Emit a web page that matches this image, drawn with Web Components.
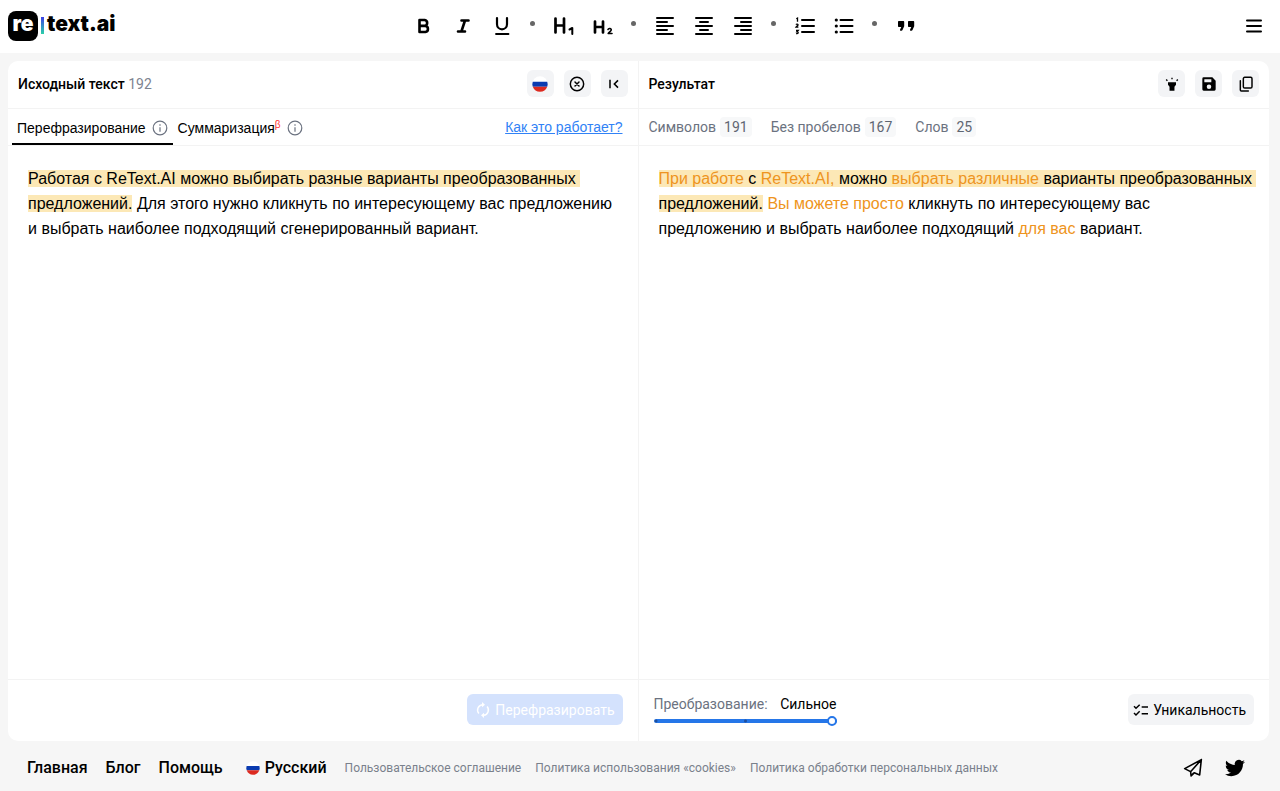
<!DOCTYPE html>
<html lang="ru">
<head>
<meta charset="utf-8">
<meta name="viewport" content="width=device-width, initial-scale=1">
<title>re|text.ai</title>
<style>
  body { margin: 0; background: #f6f6f6; color: #000; font-family: Roboto, "Liberation Sans", sans-serif; font-size: 14px; line-height: 20px; }
</style>
</head>
<body>
<rt-app></rt-app>
<script>
const ICONS = {
  bold: '<path d="M7.5 6.5h5.2a3 3 0 0 1 0 5.9H7.5zM7.5 12.4h5.9a3.1 3.1 0 0 1 0 6.1H7.5z" transform="translate(0 -.5)" fill="none" stroke="currentColor" stroke-width="2.6" stroke-linejoin="round"/>',
  italic: '<path d="M10.5 6.5h7M7 17.500h7M14 6.500 10.400 17.500" fill="none" stroke="currentColor" stroke-width="2.600" stroke-linecap="round"/>',
  underline: '<path d="M7 4v6.300a5 5 0 0 0 10 0V4" fill="none" stroke="currentColor" stroke-width="2.200" stroke-linecap="round"/><path d="M6 20h12.500" stroke="currentColor" stroke-width="1.800" stroke-linecap="round"/>',
  h1: '<path d="M3.500 4.500v14M12 4.500v14M3.500 11.500H12" fill="none" stroke="currentColor" stroke-width="2.700" stroke-linecap="round"/><path d="M17.500 15.500 20.300 14v6" fill="none" stroke="currentColor" stroke-width="2" stroke-linecap="round" stroke-linejoin="round"/>',
  h2: '<path d="M4 7.500v11M12 7.500v11M4 13h8" fill="none" stroke="currentColor" stroke-width="2.700" stroke-linecap="round"/><path d="M17 15.500c.5-1.500 3.600-1.300 3.200.6-.2 1-2 2.200-3 3.400h3.800" fill="none" stroke="currentColor" stroke-width="1.600" stroke-linecap="round" stroke-linejoin="round"/>',
  left: '<path d="M4 4h16M4 8h10M4 12h16M4 16h10M4 20h16" stroke="currentColor" stroke-width="2" stroke-linecap="round"/>',
  center: '<path d="M4 4h16M8 8h8M4 12h16M8 16h8M4 20h16" stroke="currentColor" stroke-width="2" stroke-linecap="round"/>',
  right: '<path d="M4 4h16M10 8h10M4 12h16M10 16h10M4 20h16" stroke="currentColor" stroke-width="2" stroke-linecap="round"/>',
  ordered: '<path d="M9 6h12M9 12h12M9 18h12" stroke="currentColor" stroke-width="2" stroke-linecap="round"/><path d="m3.300 4.800 1.200-.7v3.600M3 10.600c.4-.8 2.300-.7 2 .4-.2.7-1.400 1.300-2 2.200h2.400M3 16.500h2.200L4 17.800c1.800 0 1.600 2.200-.9 1.800" fill="none" stroke="currentColor" stroke-width="1.300"/>',
  bullet: '<path d="M8.500 6h12M8.500 12h12M8.500 18h12" stroke="currentColor" stroke-width="2" stroke-linecap="round"/><path d="M4.300 6h.01M4.300 12h.01M4.300 18h.01" stroke="currentColor" stroke-width="3.200" stroke-linecap="round"/>',
  quote: '<path d="M5 7h4.200c.6 0 1 .4 1 1v4.200l-1.700 3.900c-.2.500-.6.700-1 .7H7c-.8 0-1.200-.7-.9-1.400L7.300 13H5c-.6 0-1-.4-1-1V8c0-.6.400-1 1-1zM15 7h4.200c.6 0 1 .4 1 1v4.200l-1.700 3.900c-.2.500-.6.700-1 .7H17c-.8 0-1.200-.7-.9-1.400l1.200-2.400H15c-.6 0-1-.4-1-1V8c0-.6.400-1 1-1z"/>',
  menu: '<path d="M5 6.500h14M5 12h14M5 17.500h14" stroke="currentColor" stroke-width="2" stroke-linecap="round"/>',
  flag: '<circle cx="12" cy="12" r="11.500" fill="#fff"/><path d="M1.200 8.500h21.600a11.500 11.500 0 0 1 0 7.500H1.200a11.500 11.500 0 0 1 0-7.500z" fill="#0b3bb0"/><path d="M1.200 16h21.600a11.500 11.500 0 0 1-21.600 0z" fill="#dc2a20"/>',
  clear: '<circle cx="12" cy="12" r="10" fill="none" stroke="currentColor" stroke-width="2.200"/><path d="m9 9 6 6M15 9l-6 6" stroke="currentColor" stroke-width="2.200" stroke-linecap="round"/>',
  collapse: '<path d="M6 5.500v13" stroke="currentColor" stroke-width="2.300" /><path d="m18 6.500-5.500 5.500 5.500 5.500" fill="none" stroke="currentColor" stroke-width="2.300"/>',
  torch: '<path d="M6 9.500h12v3.500l-2.300 3v6H8.300v-6L6 13z"/><path d="M12 2.500v2.300M3.300 5.200l1.800 1.800M20.700 5.200l-1.800 1.800" stroke="currentColor" stroke-width="2"/>',
  save: '<path fill-rule="evenodd" d="M17 2H4a2 2 0 0 0-2 2v16a2 2 0 0 0 2 2h16a2 2 0 0 0 2-2V7l-5-5zm-5 17.500a3.400 3.400 0 1 1 0-6.800 3.400 3.400 0 0 1 0 6.800zm3.500-10H5V5h10.500v4.500z"/>',
  copy: '<rect x="8" y="2" width="13" height="16" rx="2" fill="none" stroke="currentColor" stroke-width="2.200"/><path d="M3.500 7v14a1.500 1.500 0 0 0 1.500 1.500H15.500" fill="none" stroke="currentColor" stroke-width="2.200" stroke-linecap="round"/>',
  info: '<circle cx="12" cy="12" r="10.200" fill="none" stroke="currentColor" stroke-width="1.800"/><path d="M12 11v6.500M12 6.500v2" stroke="currentColor" stroke-width="1.800"/>',
  refresh: '<path d="M5.800 17.200A8 8 0 0 1 11 4.100M18.200 6.800A8 8 0 0 1 13 19.900" fill="none" stroke="currentColor" stroke-width="2.200"/><path d="m10.500 0 4.500 4-4.500 4zM13.500 16v8L9 20z"/>',
  checks: '<path d="m1.500 6.500 3 3L10 4M1.500 16.500l3 3L10 14" fill="none" stroke="currentColor" stroke-width="2.200"/><path d="M13 7.500h9.500M13 17.500h9.500" stroke="currentColor" stroke-width="2.200"/>',
  telegram: '<path d="M2 12.700 22 2 20 20.300l-6.500-2.500-3.800 3.600-.6-5zM9.100 16.400 22 2 2 12.700zM13 17.800 9.700 21.400" fill="none" stroke="currentColor" stroke-width="1.900" stroke-linejoin="round"/>',
  twitter: '<path d="M23.953 4.570a10 10 0 0 1-2.825.775 4.958 4.958 0 0 0 2.163-2.723c-.951.555-2.005.959-3.127 1.184a4.920 4.920 0 0 0-8.384 4.482C7.690 8.095 4.067 6.130 1.640 3.162a4.822 4.822 0 0 0-.666 2.475c0 1.710.870 3.213 2.188 4.096a4.904 4.904 0 0 1-2.228-.616v.060a4.923 4.923 0 0 0 3.946 4.827 4.996 4.996 0 0 1-2.212.085 4.936 4.936 0 0 0 4.604 3.417 9.867 9.867 0 0 1-6.102 2.105c-.390 0-.779-.023-1.170-.067a13.995 13.995 0 0 0 7.557 2.209c9.053 0 13.998-7.496 13.998-13.985 0-.210 0-.420-.015-.630A9.935 9.935 0 0 0 24 4.590z"/>'
};

function define(name, html, setup) {
  const tpl = document.createElement('template');
  tpl.innerHTML = html;
  customElements.define(name, class extends HTMLElement {
    constructor() {
      super();
      this.attachShadow({ mode: 'open' }).append(tpl.content.cloneNode(true));
    }
    connectedCallback() { if (setup) setup(this, this.shadowRoot); }
  });
}

define('rt-icon', `<style>
  :host { display: inline-flex; flex: none; width: var(--size, 20px); height: var(--size, 20px); }
  svg { width: 100%; height: 100%; fill: currentColor; }
</style><svg viewBox="0 0 24 24" aria-hidden="true"></svg>`, (el, root) => {
  root.querySelector('svg').innerHTML = ICONS[el.getAttribute('name')];
});

/* Square icon button; the "tile" attribute gives it the grey background. */
define('rt-icon-button', `<style>
  :host { display: inline-flex; }
  button { display: flex; align-items: center; justify-content: center; width: 39px; height: 39px; padding: 0; border: 0; border-radius: 6px; background: none; color: inherit; cursor: pointer; --size: 24px; }
  :host([tile]) button { width: 27px; height: 27px; background: #f3f4f6; --size: 16px; }
  button:hover { background: #e9ebee; }
</style><button type="button"></button>`, (el, root) => {
  const button = root.querySelector('button');
  button.setAttribute('aria-label', el.getAttribute('label'));
  button.innerHTML = '<rt-icon name="' + el.getAttribute('icon') + '"></rt-icon>';
});

define('rt-logo', `<style>
  :host { display: block; }
  a { display: flex; align-items: center; gap: 3px; color: #000; text-decoration: none; font: 900 21px/30px Inter, sans-serif; }
  .mark { width: 30px; height: 30px; line-height: 26px; border-radius: 8px; background: #000; color: #fff; text-align: center; }
  .bar { width: 3px; height: 17px; background: linear-gradient(#3b3fe6, #2bd1a8); }
  .name { line-height: 26px; height: 30px; }
</style><a href="#"><span class="mark">re</span><span class="bar"></span><span class="name">text.ai</span></a>`);

define('rt-toolbar', `<style>
  :host { display: flex; align-items: center; justify-content: center; }
  i { flex: none; width: 5px; height: 5px; margin: 0 9px 4px; border-radius: 50%; background: #666; }
</style>
<rt-icon-button icon="bold" label="Полужирный"></rt-icon-button><rt-icon-button icon="italic" label="Курсив"></rt-icon-button><rt-icon-button icon="underline" label="Подчёркнутый"></rt-icon-button><i></i>
<rt-icon-button icon="h1" label="Заголовок 1"></rt-icon-button><rt-icon-button icon="h2" label="Заголовок 2"></rt-icon-button><i></i>
<rt-icon-button icon="left" label="По левому краю"></rt-icon-button><rt-icon-button icon="center" label="По центру"></rt-icon-button><rt-icon-button icon="right" label="По правому краю"></rt-icon-button><i></i>
<rt-icon-button icon="ordered" label="Нумерованный список"></rt-icon-button><rt-icon-button icon="bullet" label="Маркированный список"></rt-icon-button><i></i>
<rt-icon-button icon="quote" label="Цитата"></rt-icon-button>`);

define('rt-header', `<style>
  :host { display: grid; grid-template-columns: auto 1fr auto; align-items: center; min-height: 53px; padding: 0 7px 2px 8px; background: #fff; box-sizing: border-box; }
  rt-toolbar { padding-right: 20px; }
</style><rt-logo></rt-logo><rt-toolbar role="toolbar"></rt-toolbar><rt-icon-button icon="menu" label="Меню"></rt-icon-button>`);

define('rt-panel', `<style>
  :host { display: grid; grid-template-rows: 48px 37px 1fr 62px; min-width: 0; }
  header, nav, footer { display: flex; align-items: center; }
  header { padding: 0 10px 2px; border-bottom: 1px solid #f3f3f3; }
  h2 { margin: 0 auto 0 0; font-size: 14px; font-weight: 500; line-height: 20px; }
  .actions { display: flex; gap: 10px; }
  nav { border-bottom: 1px solid #f3f3f3; }
  .body { padding: 20px 15px 20px 20px; font: 16px/25px "Liberation Sans", Arial, sans-serif; }
  footer { border-top: 1px solid #f3f3f3; padding: 0 15px 2px; }
</style>
<header><h2><slot name="title"></slot></h2><div class="actions"><slot name="actions"></slot></div></header>
<nav><slot name="bar"></slot></nav>
<div class="body"><slot></slot></div>
<footer><slot name="footer"></slot></footer>`);

define('rt-tabs', `<style>
  :host { display: flex; flex: 1; align-items: stretch; height: 36px; padding: 0 15px 0 4px; font-family: "Liberation Sans", Arial, sans-serif; }
  [role=tab] { display: flex; align-items: center; gap: 6px; padding: 3px 5px 0; border: 0; border-bottom: 2px solid transparent; background: none; color: #000; font: inherit; height: 36px; }
  [aria-selected=true] { border-color: #000; }
  rt-icon { --size: 16px; color: #6b7280; }
  sup { color: #f33; font-size: 10px; line-height: 14px; vertical-align: top; }
  a { margin-left: auto; align-self: center; color: #3182f6; text-decoration: underline; }
</style>
<button type="button" role="tab" aria-selected="true"><span>Перефразирование</span><rt-icon name="info"></rt-icon></button><button type="button" role="tab" aria-selected="false"><span>Суммаризация<sup>β</sup></span><rt-icon name="info"></rt-icon></button>
<a href="#">Как это работает?</a>`);

define('rt-stat', `<style>
  :host { display: inline-flex; align-items: center; gap: 4px; color: #6b7280; }
  b { padding: 0 4px; border-radius: 4px; background: #f7f8f9; font-weight: 400; color: #5f6672; }
</style><slot></slot><b></b>`, (el, root) => { root.querySelector('b').textContent = el.getAttribute('value'); });

define('rt-strength', `<style>
  :host { display: grid; width: 183px; gap: 2px; }
  .row { display: flex; justify-content: space-between; color: #6b7280; line-height: 20px; }
  output { color: #000; }
  input { appearance: none; width: 100%; height: 10px; margin: 0; background: none; }
  input::-webkit-slider-runnable-track { height: 4px; border-radius: 2px; background: radial-gradient(circle at 2px 2px, #1d4f9f 1px, transparent 2px), radial-gradient(circle at 50% 50%, #1d4f9f 1px, transparent 2px), #2576e8; }
  input::-webkit-slider-thumb { appearance: none; box-sizing: border-box; width: 10px; height: 10px; margin-top: -3px; border: 2px solid #2576e8; border-radius: 50%; background: #fff; }
</style>
<div class="row"><label for="level">Преобразование:</label><output for="level">Сильное</output></div>
<input id="level" type="range" min="0" max="2" value="2">`);

define('rt-button', `<style>
  :host { display: inline-flex; margin-left: auto; }
  button { display: flex; align-items: center; gap: 4px; height: 31px; padding: 0 8px 0 5px; border: 0; border-radius: 6px; background: #f3f4f6; color: #000; font: 14px/20px Roboto, sans-serif; --size: 16px; }
  :host([primary]) button { padding: 0 8px; background: #d4e2fd; color: #fff; }
</style><button type="button"><slot name="icon"></slot><slot></slot></button>`, (el, root) => {
  root.querySelector('button').disabled = el.hasAttribute('disabled');
});

define('rt-workspace', `<style>
  :host { display: grid; grid-template-columns: 1fr 1fr; margin: 8px 11px 0 8px; border-radius: 10px; background: #fff; }
  .source { border-right: 1px solid #f3f3f3; }
  .count { color: #7d8490; font-weight: 400; }
  p { margin: 0; white-space: pre-wrap; }
  mark { background: #fce8b6; color: inherit; }
  em { font-style: normal; color: #ee9420; }
  .stats { display: flex; flex-wrap: wrap; gap: 19px; padding-left: 10px; }
</style>
<rt-panel class="source">
  <span slot="title">Исходный текст <span class="count">192</span></span>
  <rt-icon-button tile slot="actions" icon="flag" label="Русский"></rt-icon-button>
  <rt-icon-button tile slot="actions" icon="clear" label="Очистить"></rt-icon-button>
  <rt-icon-button tile slot="actions" icon="collapse" label="Свернуть"></rt-icon-button>
  <rt-tabs slot="bar"></rt-tabs>
  <p><mark>Работая с ReText.AI можно выбирать разные варианты преобразованных предложений.</mark> Для этого нужно кликнуть по интересующему вас предложению и выбрать наиболее подходящий сгенерированный вариант.</p>
  <rt-button slot="footer" primary disabled><rt-icon slot="icon" name="refresh"></rt-icon>Перефразировать</rt-button>
</rt-panel>
<rt-panel>
  <span slot="title">Результат</span>
  <rt-icon-button tile slot="actions" icon="torch" label="Подсветка"></rt-icon-button>
  <rt-icon-button tile slot="actions" icon="save" label="Сохранить"></rt-icon-button>
  <rt-icon-button tile slot="actions" icon="copy" label="Копировать"></rt-icon-button>
  <div slot="bar" class="stats"><rt-stat value="191">Символов</rt-stat><rt-stat value="167">Без пробелов</rt-stat><rt-stat value="25">Слов</rt-stat></div>
  <p><mark><em>При работе</em><span> с </span><em>ReText.AI,</em><span> можно </span><em>выбрать различные</em><span> варианты преобразованных </span><span>предложений.</span></mark> <em>Вы можете просто</em><span> кликнуть по интересующему вас </span><span>предложению и выбрать наиболее подходящий </span><em>для вас</em><span> вариант.</span></p>
  <rt-strength slot="footer"></rt-strength>
  <rt-button slot="footer"><rt-icon slot="icon" name="checks"></rt-icon>Уникальность</rt-button>
</rt-panel>`);

define('rt-footer', `<style>
  :host { display: flex; flex-wrap: wrap; align-items: center; gap: 0 18px; min-height: 50px; padding: 4px 35px 0 27px; box-sizing: border-box; }
  nav { display: flex; align-items: center; }
  a { color: #000; text-decoration: none; }
  .main { gap: 18px; font-size: 16px; font-weight: 500; }
  .lang { display: flex; align-items: center; gap: 5px; margin-left: 5px; --size: 14px; }
  .legal { gap: 14px; font-size: 12px; }
  .legal a { color: #7a818c; }
  .social { margin-left: auto; gap: 22px; }
  .social a { display: flex; }
</style>
<nav class="main"><a href="#">Главная</a><a href="#">Блог</a><a href="#">Помощь</a><a href="#" class="lang"><rt-icon name="flag"></rt-icon>Русский</a></nav>
<nav class="legal"><a href="#">Пользовательское соглашение</a><a href="#">Политика использования «cookies»</a><a href="#">Политика обработки персональных данных</a></nav>
<nav class="social"><a href="#" aria-label="Telegram"><rt-icon name="telegram"></rt-icon></a><a href="#" aria-label="Twitter"><rt-icon name="twitter"></rt-icon></a></nav>`);

define('rt-app', `<style>
  :host { display: flex; flex-direction: column; min-height: 100vh; }
  rt-workspace { flex: 1; }
</style><rt-header></rt-header><rt-workspace></rt-workspace><rt-footer></rt-footer>`);
</script>
</body>
</html>
